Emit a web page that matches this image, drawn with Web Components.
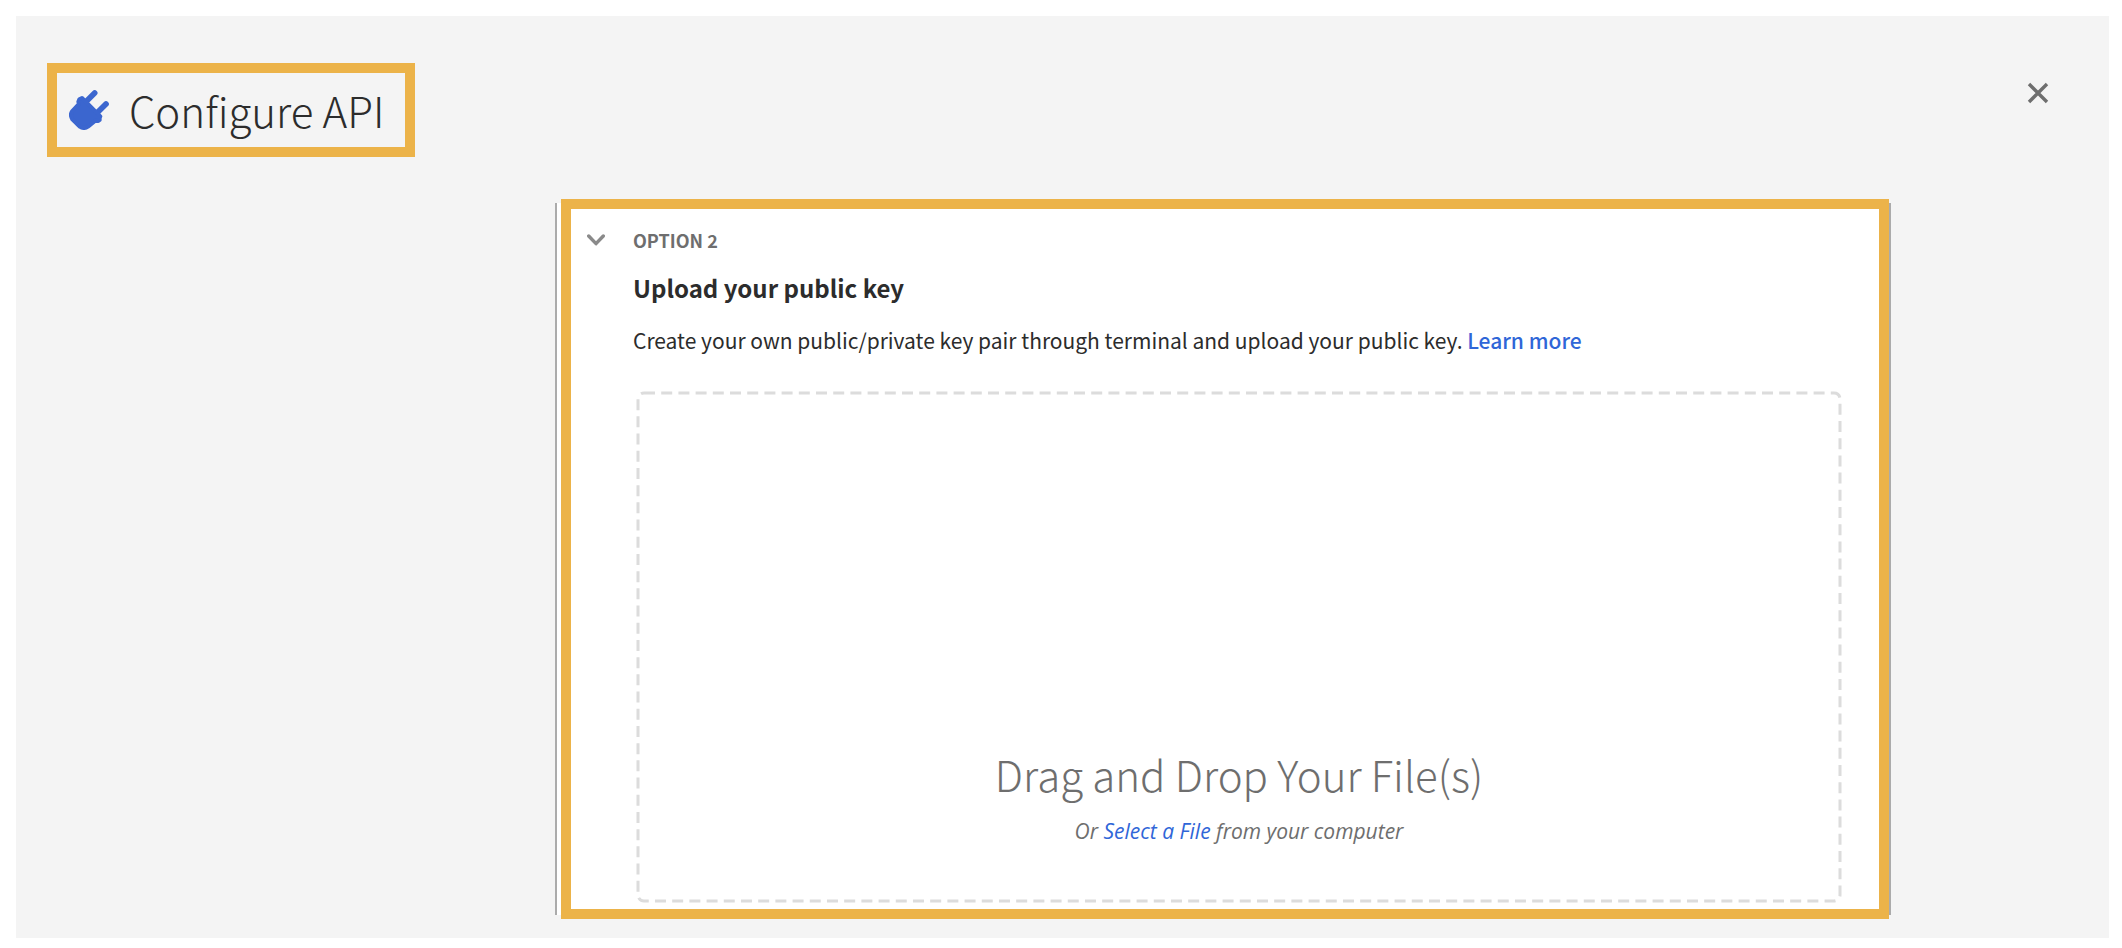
<!DOCTYPE html>
<html lang="en">
<head>
<meta charset="utf-8">
<meta name="viewport" content="width=device-width, initial-scale=1">
<title>Configure API</title>
<style>
    body {
        margin: 16px 13px 10px 16px;
        background: #fff;
        color: #2c2c2c;
        font-family: "Noto Sans CJK SC", "Open Sans", sans-serif;
        --accent: #3b66cf;
        --frame: #ecb349;
        --muted: #6e6e6e;
    }
</style>
</head>
<body>

<configure-dialog>
    <highlight-frame slot="title">
        <dialog-title>Configure API</dialog-title>
    </highlight-frame>
    <option-panel>
        <highlight-frame>
            <key-option>
                <span slot="label">Option 2</span>
                <span slot="heading">Upload your public key</span>
                <span slot="description">Create your own public/private key pair through terminal and upload your public key. <text-link href="#learn-more">Learn more</text-link></span>
                <file-drop>
                    <span slot="heading">Drag and Drop Your File(s)</span>
                    <span slot="hint">Or <text-link href="#select-file">Select a File</text-link> from your computer</span>
                </file-drop>
            </key-option>
        </highlight-frame>
    </option-panel>
</configure-dialog>

<script>
class BaseElement extends HTMLElement {
    constructor() {
        super();
        this.attachShadow({ mode: 'open' });
    }

    connectedCallback() {
        const template = document.createElement('template');
        template.innerHTML = this.template();
        this.shadowRoot.replaceChildren(template.content.cloneNode(true));
    }
}

// Grey page surface with the title on the left and the close button on the right
class ConfigureDialog extends BaseElement {
    template() {
        return `
            <style>
                :host {
                    display: block;
                    box-sizing: border-box;
                    min-height: calc(100vh - 26px);
                    padding-bottom: 19px;
                    background: #f4f4f4;
                }
                header {
                    display: flex;
                    justify-content: space-between;
                    align-items: flex-start;
                    padding: 47px 51px 42px 31px;
                }
                button {
                    display: flex;
                    align-items: center;
                    justify-content: center;
                    width: 40px;
                    height: 40px;
                    margin: 10px 0 0;
                    padding: 0;
                    border: 0;
                    background: none;
                    color: var(--muted);
                    cursor: pointer;
                }
            </style>
            <header>
                <slot name="title"></slot>
                <button type="button" aria-label="Close">
                    <svg width="22" height="22" viewBox="0 0 22 22" fill="none" stroke="currentColor" stroke-width="3.4">
                        <path d="M2 2 20 20M20 2 2 20"/>
                    </svg>
                </button>
            </header>
            <main><slot></slot></main>
        `;
    }
}

// Thick orange outline around whatever is slotted in
class HighlightFrame extends BaseElement {
    template() {
        return `
            <style>
                :host {
                    display: block;
                    border: 10px solid var(--frame);
                }
            </style>
            <slot></slot>
        `;
    }
}

class DialogTitle extends BaseElement {
    template() {
        return `
            <style>
                :host {
                    display: flex;
                    align-items: center;
                    gap: 20px;
                    padding: 9px 21px 9px 12px;
                }
                svg {
                    flex: none;
                    color: var(--accent);
                }
                h1 {
                    margin: 0;
                    font-size: 42px;
                    font-weight: 300;
                    line-height: 56px;
                    white-space: nowrap;
                }
            </style>
            <svg width="40" height="40" viewBox="39 42 120 120" fill="currentColor" stroke="currentColor" stroke-linecap="round" stroke-linejoin="round" aria-hidden="true">
                <path stroke-width="17" d="M92 75 116 51M125 109 150 84"/>
                <path stroke-width="12" d="M78 66 133 121 131 126V132L127 135 118 134 96 152Q84 160 71 152L49 130Q41 117 48 106L69 84 67 77 70 70Z"/>
            </svg>
            <h1><slot></slot></h1>
        `;
    }
}

// White card with hairlines on both sides; the frame inside is a little taller
class OptionPanel extends BaseElement {
    template() {
        return `
            <style>
                :host {
                    display: flow-root;
                    margin: 4px 218px 4px 539px;
                    padding-left: 4px;
                    border: solid #ababab;
                    border-width: 0 2px;
                    background: #fff;
                }
                ::slotted(*) {
                    margin: -4px 0;
                }
            </style>
            <slot></slot>
        `;
    }
}

class KeyOption extends BaseElement {
    template() {
        return `
            <style>
                :host {
                    display: flex;
                    gap: 25px;
                    padding: 19px 37px 6px 13px;
                    background: #fff;
                }
                button {
                    display: flex;
                    align-items: center;
                    justify-content: center;
                    flex: none;
                    width: 24px;
                    height: 24px;
                    padding: 0;
                    border: 0;
                    background: none;
                    color: #8a8a8a;
                    cursor: pointer;
                }
                section {
                    flex: 1;
                    min-width: 0;
                }
                p, h2 {
                    margin: 0;
                }
                .label {
                    color: var(--muted);
                    font-size: 18px;
                    font-weight: 700;
                    line-height: 24px;
                    text-transform: uppercase;
                }
                h2 {
                    margin-top: 20px;
                    font-size: 24px;
                    font-weight: 700;
                    line-height: 32px;
                }
                .description {
                    margin: 20px 0 35px;
                    font-size: 21px;
                    line-height: 32px;
                }
                ::slotted(file-drop) {
                    margin-left: 3px;
                }
            </style>
            <button type="button" aria-label="Collapse option" aria-expanded="true">
                <svg width="18" height="12" viewBox="0 0 18 12" fill="none" stroke="currentColor" stroke-width="3.4" stroke-linecap="round" stroke-linejoin="round">
                    <path d="M1.7 2 9 9.7 16.3 2"/>
                </svg>
            </button>
            <section>
                <p class="label"><slot name="label"></slot></p>
                <h2><slot name="heading"></slot></h2>
                <p class="description"><slot name="description"></slot></p>
                <slot></slot>
            </section>
        `;
    }
}

// The outline and the text share one grid cell, so the dashes follow the box size
class FileDrop extends BaseElement {
    template() {
        return `
            <style>
                :host {
                    display: grid;
                    min-height: 512px;
                    color: var(--muted);
                }
                svg, .content {
                    grid-area: 1 / 1;
                }
                svg {
                    width: 100%;
                    height: 100%;
                    overflow: visible;
                }
                rect {
                    x: 2px;
                    y: 2px;
                    width: calc(100% - 4px);
                    height: calc(100% - 4px);
                    fill: none;
                    stroke: #dcdcdc;
                    stroke-width: 3;
                    stroke-dasharray: 11 6.2;
                }
                .content {
                    display: flex;
                    flex-direction: column;
                    justify-content: flex-end;
                    gap: 13px;
                    padding-bottom: 56px;
                    text-align: center;
                }
                h3, p {
                    margin: 0;
                }
                h3 {
                    font-size: 42px;
                    font-weight: 300;
                    line-height: 56px;
                }
                p {
                    font-family: "Open Sans", sans-serif;
                    font-size: 21px;
                    font-style: italic;
                    line-height: 32px;
                }
            </style>
            <svg aria-hidden="true"><rect rx="6"/></svg>
            <div class="content">
                <h3><slot name="heading"></slot></h3>
                <p><slot name="hint"></slot></p>
            </div>
        `;
    }
}

class TextLink extends BaseElement {
    template() {
        return `
            <style>
                :host {
                    display: inline;
                }
                a {
                    color: #2f66d8;
                    font-weight: 500;
                    text-decoration: none;
                }
                a:hover {
                    text-decoration: underline;
                }
            </style>
            <a href="${this.getAttribute('href')}"><slot></slot></a>
        `;
    }
}

customElements.define('configure-dialog', ConfigureDialog);
customElements.define('highlight-frame', HighlightFrame);
customElements.define('dialog-title', DialogTitle);
customElements.define('option-panel', OptionPanel);
customElements.define('key-option', KeyOption);
customElements.define('file-drop', FileDrop);
customElements.define('text-link', TextLink);
</script>
</body>
</html>
